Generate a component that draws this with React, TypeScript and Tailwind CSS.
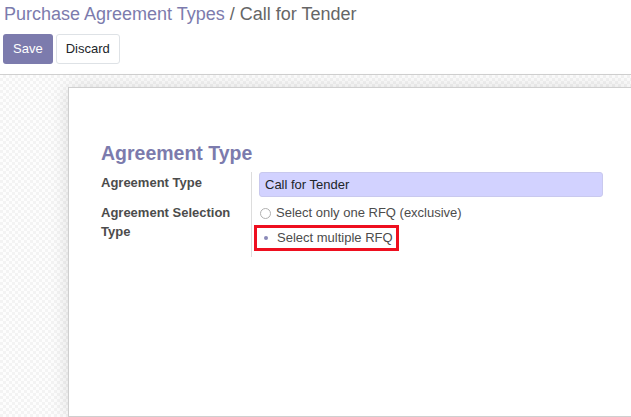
import React from 'react'

export default function App() {
  return (
    <div className="w-[631px] h-[417px] overflow-hidden bg-white font-['Liberation_Sans',Arial,sans-serif] flex flex-col">
      {/* Control panel */}
      <div className="px-[4px] pt-[2px] border-b border-[#d0d0d0] pb-[10px]">
        <div className="text-[18px] leading-[22px] pt-[1px]">
          <span className="text-[#7c7bad]">Purchase Agreement Types</span>
          <span className="text-[#666666]"> / Call for Tender</span>
        </div>
        <div className="flex gap-[3px] mt-[9px] -ml-[1px]">
          <button className="h-[30px] px-[10px] rounded-[3px] bg-[#7c7bad] text-white text-[13px]">Save</button>
          <button className="h-[30px] px-[9px] rounded-[3px] bg-white border border-[#dee2e6] text-[#212529] text-[13px]">Discard</button>
        </div>
      </div>

      {/* Form area */}
      <div className="flex-1 flex pt-[12px] bg-[repeating-conic-gradient(#f3f3f3_0_25%,#fdfdfd_0_50%)] bg-[length:6px_6px]">
        <div className="ml-[68px] flex-1 bg-white border-l border-b border-t border-[#cfcfcf] shadow-[0_0_18px_rgba(0,0,0,0.12)] pl-[32px] pt-[53px]">
          <h1 className="text-[19.5px] leading-[24px] font-bold text-[#7c7bad]">Agreement Type</h1>
          <div className="flex mt-[7px]">
            <div className="w-[150px] flex flex-col text-[13px] font-bold text-[#4c4c4c] leading-[19px] pt-[1px] pr-[8px]">
              <div className="h-[30px]">Agreement Type</div>
              <div>Agreement Selection<br />Type</div>
            </div>
            <div className="border-l border-[#dddddd] pl-[7px] w-[352px] pb-[6px] text-[13px] text-[#4c4c4c]">
              <div className="h-[25px] rounded-[3px] bg-[#d2d2ff] border border-[#c9c9ee] px-[5px] flex items-center text-[#212529]">Call for Tender</div>
              <div className="flex items-center gap-[5px] mt-[8px] h-[16px] pl-[1px]">
                <span className="w-[11px] h-[11px] rounded-full border border-[#b0b0b0] bg-white" />
                <span>Select only one RFQ (exclusive)</span>
              </div>
              <div className="mt-[4px] -ml-[5px] w-[145px] h-[26px] border-[3px] border-[#ee0f1f] flex items-center gap-[5px] pl-[3px]">
                <span className="w-[11px] h-[11px] rounded-full bg-white flex items-center justify-center">
                  <span className="w-[4px] h-[4px] rounded-full bg-[#8a89b8]" />
                </span>
                <span className="pl-[1px]">Select multiple RFQ</span>
              </div>
            </div>
          </div>
        </div>
      </div>
    </div>
  )
}
